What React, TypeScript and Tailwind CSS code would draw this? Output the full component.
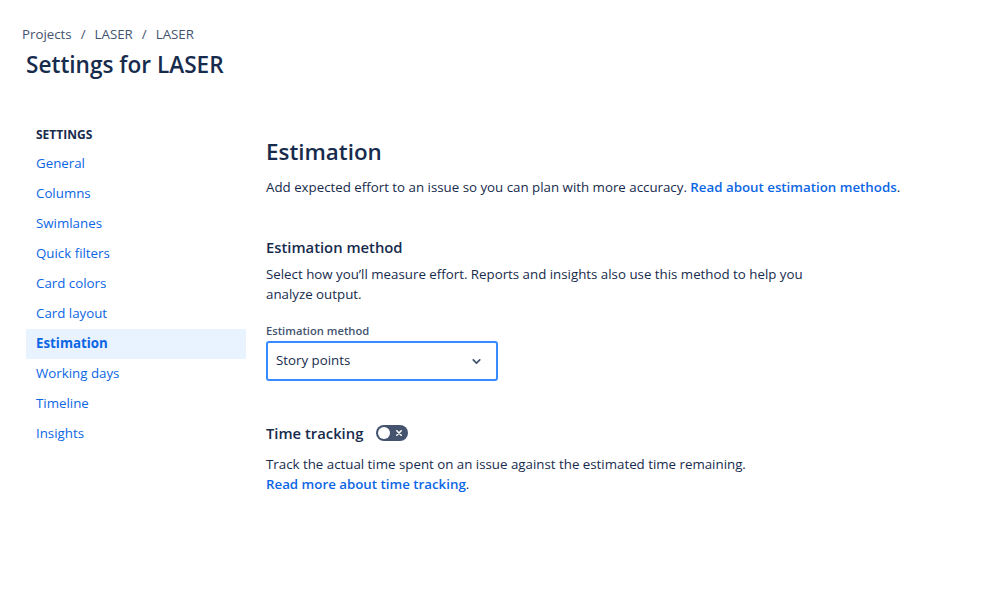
import { ChevronDown } from 'lucide-react';

const navItems = [
  'General',
  'Columns',
  'Swimlanes',
  'Quick filters',
  'Card colors',
  'Card layout',
  'Estimation',
  'Working days',
  'Timeline',
  'Insights',
];

export default function App() {
  const active = 'Estimation';

  return (
    <div
      className="min-h-[615px] w-full bg-white text-[#172B4D]"
      style={{ fontFamily: '"Open Sans", "Noto Sans", sans-serif' }}
    >
      {/* Header */}
      <div className="px-[22px] pt-[24px]">
        <nav className="flex items-center text-[13.3px] leading-[20px] text-[#44546F]">
          <span>Projects</span>
          <span className="px-[9px]">/</span>
          <span>LASER</span>
          <span className="px-[9px]">/</span>
          <span>LASER</span>
        </nav>
        <h1 className="ml-[4px] mt-[7px] text-[22.6px] font-semibold leading-[28px] text-[#172B4D]">
          Settings for LASER
        </h1>
      </div>

      <div className="mt-[48px] flex">
        {/* Sidebar */}
        <aside className="ml-[26px] w-[220px] shrink-0">
          <div className="px-[10px] text-[12px] font-bold leading-[16px] text-[#172B4D]">SETTINGS</div>
          <ul className="mt-[6px]">
            {navItems.map((item) => (
              <li
                key={item}
                className={`flex h-[30px] items-center px-[10px] text-[13.3px] ${
                  item === active ? 'bg-[#E9F2FF] font-bold text-[#0C66E4]' : 'text-[#0C66E4]'
                }`}
              >
                {item}
              </li>
            ))}
          </ul>
        </aside>

        {/* Main */}
        <main className="ml-[20px] mt-[9px] flex-1">
          <h2 className="text-[22.4px] font-semibold leading-[32px] text-[#172B4D]">Estimation</h2>
          <p className="mt-[9px] text-[13.3px] leading-[20px] text-[#172B4D]">
            Add expected effort to an issue so you can plan with more accuracy.{' '}
            <span className="font-semibold text-[#0C66E4]">Read about estimation methods</span>.
          </p>

          <h3 className="mt-[40px] text-[14.8px] font-semibold leading-[20px] text-[#172B4D]">Estimation method</h3>
          <p className="mt-[7px] w-[560px] text-[13.3px] leading-[20px] text-[#172B4D]">
            Select how you’ll measure effort. Reports and insights also use this method to help you analyze output.
          </p>

          <label className="mt-[19px] block text-[11.2px] font-semibold leading-[16px] text-[#44546F]">
            Estimation method
          </label>
          <div className="mt-[2px] flex h-[40px] w-[232px] items-center justify-between rounded-[3px] border-2 border-[#388BFF] pl-[8px] pr-[13px]">
            <span className="text-[13.3px] text-[#172B4D]">Story points</span>
            <ChevronDown size={13} strokeWidth={3.2} className="text-[#44546F]" />
          </div>

          <div className="mt-[42px] flex items-center gap-[13px]">
            <h3 className="text-[14.8px] font-semibold leading-[20px] text-[#172B4D]">Time tracking</h3>
            <div className="relative flex h-[16px] w-[32px] items-center rounded-full bg-[#44546F] px-[2px]">
              <span className="h-[12px] w-[12px] rounded-full bg-white" />
              <svg className="absolute right-[4px]" width="10" height="10" viewBox="0 0 10 10">
                <path d="M2.8 2.8L7.2 7.2M7.2 2.8L2.8 7.2" stroke="white" strokeWidth="1.6" strokeLinecap="round" />
              </svg>
            </div>
          </div>
          <p className="mt-[11px] text-[13.3px] leading-[20px] text-[#172B4D]">
            Track the actual time spent on an issue against the estimated time remaining.
            <br />
            <span className="font-semibold text-[#0C66E4]">Read more about time tracking</span>.
          </p>
        </main>
      </div>
    </div>
  );
}
